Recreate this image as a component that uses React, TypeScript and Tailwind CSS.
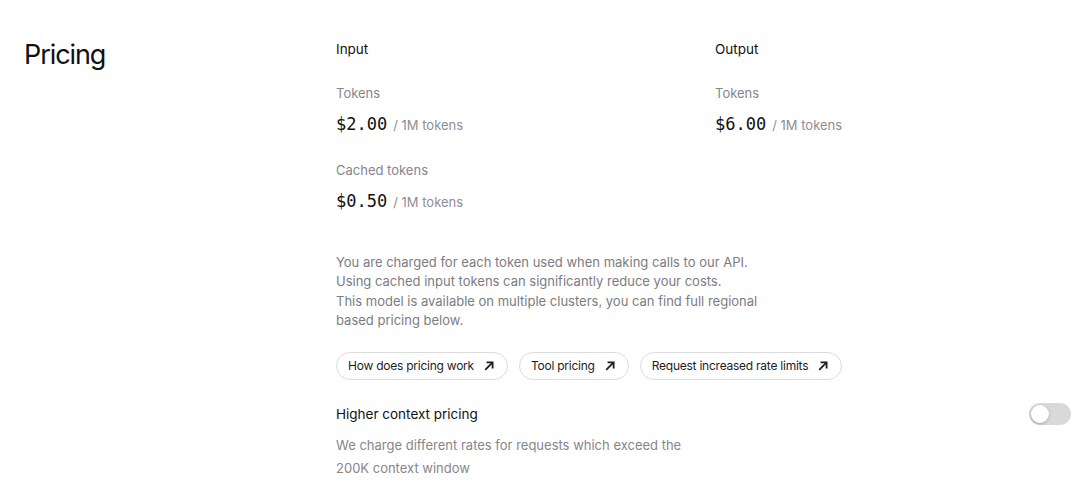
const mono = { fontFamily: '"DejaVu Sans Mono", monospace' };

function Price({ label, value, className = "" }: { label: string; value: string; className?: string }) {
  return (
    <div className={className}>
      <div className="text-[13px] leading-5 text-[#86868b]">{label}</div>
      <div className="mt-[7px] flex items-baseline gap-[6px] leading-7">
        <span className="text-[17px] font-medium text-[#111]" style={mono}>
          {value}
        </span>
        <span className="text-[13px] text-[#8e8e93]">/ 1M tokens</span>
      </div>
    </div>
  );
}

function LinkPill({ label }: { label: string }) {
  return (
    <button className="flex h-7 items-center gap-[10px] rounded-full border border-[#dcdcdc] bg-white pl-[11px] pr-[13px] text-[12px] tracking-[-0.02em] text-[#1d1d1f]">
      {label}
      <svg width="10" height="10" viewBox="0 0 10 10" fill="none" stroke="currentColor" strokeWidth="1.8">
        <path d="M1.2 8.8 8.6 1.4" />
        <path d="M2.6 1.4h6v6" />
      </svg>
    </button>
  );
}

export default function App() {
  return (
    <div
      className="flex h-[498px] w-[1080px] bg-white pt-[39px] text-[#111]"
      style={{ fontFamily: 'Inter, "Liberation Sans", sans-serif' }}
    >
      {/* LEFT TITLE */}
      <div className="w-[336px] shrink-0 pl-6">
        <h1 className="text-[27px] leading-8 tracking-[-0.04em] text-[#111]">Pricing</h1>
      </div>

      {/* CONTENT */}
      <div className="flex-1 pr-[9px]">
        <div className="grid grid-cols-[379px_1fr]">
          <div>
            <div className="text-[13.5px] leading-5">Input</div>
            <Price className="mt-6" label="Tokens" value="$2.00" />
            <Price className="mt-[21px]" label="Cached tokens" value="$0.50" />
          </div>
          <div>
            <div className="text-[13.5px] leading-5">Output</div>
            <Price className="mt-6" label="Tokens" value="$6.00" />
          </div>
        </div>

        <p className="mt-[37px] w-[440px] text-[13px] leading-[19.3px] text-[#7c7c80]">
          You are charged for each token used when making calls to our API.
          <br />
          Using cached input tokens can significantly reduce your costs.
          <br />
          This model is available on multiple clusters, you can find full regional
          <br />
          based pricing below.
        </p>

        <div className="mt-[22px] flex gap-[11px]">
          <LinkPill label="How does pricing work" />
          <LinkPill label="Tool pricing" />
          <LinkPill label="Request increased rate limits" />
        </div>

        <div className="mt-[23px] flex items-center justify-between">
          <div className="text-[13.5px] leading-5">Higher context pricing</div>
          <div className="flex h-[22px] w-[42px] items-center rounded-full bg-[#d9d9d9] p-[2px]">
            <div className="h-[18px] w-[18px] rounded-full bg-white shadow-[0_1px_3px_rgba(0,0,0,0.25)]" />
          </div>
        </div>

        <p className="mt-[9px] text-[13px] leading-[23px] text-[#86868b]">
          We charge different rates for requests which exceed the
          <br />
          200K context window
        </p>
      </div>
    </div>
  );
}
